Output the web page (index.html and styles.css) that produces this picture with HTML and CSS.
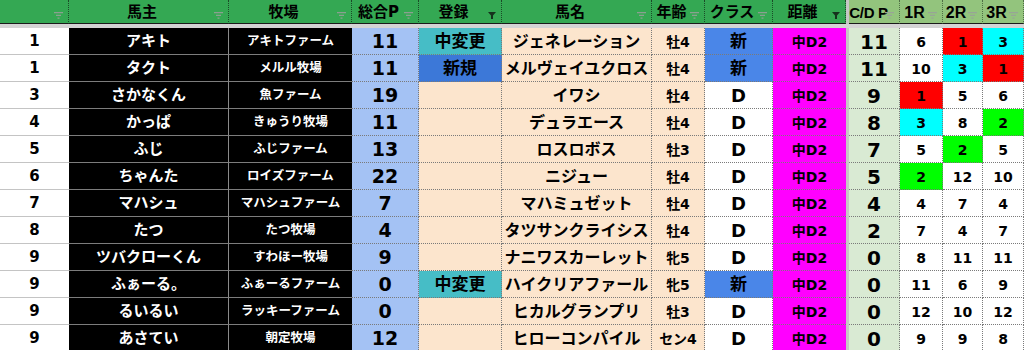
FILE: index.html
```html
<!DOCTYPE html>
<html lang="ja">
<head>
<meta charset="utf-8">
<title>馬主ランキング</title>
<link rel="stylesheet" href="styles.css">
</head>
<body>
<div class="sheet">
  <div class="row head">
    <div class="h"><svg class="flt" viewBox="0 0 9 7"><path d="M0 0h9v1.2H0zM2 2.8h5v1.2H2zM3.5 5.6h2v1.2h-2z"/></svg></div>
    <div class="h">馬主<svg class="flt" viewBox="0 0 9 7"><path d="M0 0h9v1.2H0zM2 2.8h5v1.2H2zM3.5 5.6h2v1.2h-2z"/></svg></div>
    <div class="h">牧場<svg class="flt" viewBox="0 0 9 7"><path d="M0 0h9v1.2H0zM2 2.8h5v1.2H2zM3.5 5.6h2v1.2h-2z"/></svg></div>
    <div class="h">総合P<svg class="flt" viewBox="0 0 9 7"><path d="M0 0h9v1.2H0zM2 2.8h5v1.2H2zM3.5 5.6h2v1.2h-2z"/></svg></div>
    <div class="h">登録<svg class="flt on" viewBox="0 0 8 7"><path d="M0 0h8L5 3.6V7H3V3.6z"/></svg></div>
    <div class="h">馬名<svg class="flt" viewBox="0 0 9 7"><path d="M0 0h9v1.2H0zM2 2.8h5v1.2H2zM3.5 5.6h2v1.2h-2z"/></svg></div>
    <div class="h">年齢<svg class="flt" viewBox="0 0 9 7"><path d="M0 0h9v1.2H0zM2 2.8h5v1.2H2zM3.5 5.6h2v1.2h-2z"/></svg></div>
    <div class="h">クラス<svg class="flt" viewBox="0 0 9 7"><path d="M0 0h9v1.2H0zM2 2.8h5v1.2H2zM3.5 5.6h2v1.2h-2z"/></svg></div>
    <div class="h">距離<svg class="flt on" viewBox="0 0 8 7"><path d="M0 0h8L5 3.6V7H3V3.6z"/></svg></div>
    <div class="sep"></div>
    <div class="h lg sm">C/D P<svg class="flt" viewBox="0 0 9 7"><path d="M0 0h9v1.2H0zM2 2.8h5v1.2H2zM3.5 5.6h2v1.2h-2z"/></svg></div>
    <div class="h lg">1R<svg class="flt" viewBox="0 0 9 7"><path d="M0 0h9v1.2H0zM2 2.8h5v1.2H2zM3.5 5.6h2v1.2h-2z"/></svg></div>
    <div class="h lg">2R<svg class="flt" viewBox="0 0 9 7"><path d="M0 0h9v1.2H0zM2 2.8h5v1.2H2zM3.5 5.6h2v1.2h-2z"/></svg></div>
    <div class="h lg">3R<svg class="flt" viewBox="0 0 9 7"><path d="M0 0h9v1.2H0zM2 2.8h5v1.2H2zM3.5 5.6h2v1.2h-2z"/></svg></div>
  </div>
  <div class="freeze"></div>

  <div class="row">
    <div class="c rank">1</div><div class="c owner">アキト</div><div class="c farm">アキトファーム</div>
    <div class="c tp">11</div><div class="c reg chg">中変更</div><div class="c name">ジェネレーション</div>
    <div class="c age">牡4</div><div class="c cls new">新</div><div class="c dist">中D2</div><div class="sep"></div>
    <div class="c cdp">11</div><div class="c r">6</div><div class="c r red">1</div><div class="c r cyan">3</div>
  </div>
  <div class="row">
    <div class="c rank">1</div><div class="c owner">タクト</div><div class="c farm">メルル牧場</div>
    <div class="c tp">11</div><div class="c reg nw">新規</div><div class="c name">メルヴェイユクロス</div>
    <div class="c age">牡4</div><div class="c cls new">新</div><div class="c dist">中D2</div><div class="sep"></div>
    <div class="c cdp">11</div><div class="c r">10</div><div class="c r cyan">3</div><div class="c r red">1</div>
  </div>
  <div class="row">
    <div class="c rank">3</div><div class="c owner">さかなくん</div><div class="c farm">魚ファーム</div>
    <div class="c tp">19</div><div class="c reg"></div><div class="c name">イワシ</div>
    <div class="c age">牡4</div><div class="c cls">D</div><div class="c dist">中D2</div><div class="sep"></div>
    <div class="c cdp">9</div><div class="c r red">1</div><div class="c r">5</div><div class="c r">6</div>
  </div>
  <div class="row">
    <div class="c rank">4</div><div class="c owner">かっぱ</div><div class="c farm">きゅうり牧場</div>
    <div class="c tp">11</div><div class="c reg"></div><div class="c name">デュラエース</div>
    <div class="c age">牡4</div><div class="c cls">D</div><div class="c dist">中D2</div><div class="sep"></div>
    <div class="c cdp">8</div><div class="c r cyan">3</div><div class="c r">8</div><div class="c r green">2</div>
  </div>
  <div class="row">
    <div class="c rank">5</div><div class="c owner">ふじ</div><div class="c farm">ふじファーム</div>
    <div class="c tp">13</div><div class="c reg"></div><div class="c name">ロスロボス</div>
    <div class="c age">牡3</div><div class="c cls">D</div><div class="c dist">中D2</div><div class="sep"></div>
    <div class="c cdp">7</div><div class="c r">5</div><div class="c r green">2</div><div class="c r">5</div>
  </div>
  <div class="row">
    <div class="c rank">6</div><div class="c owner">ちゃんた</div><div class="c farm">ロイズファーム</div>
    <div class="c tp">22</div><div class="c reg"></div><div class="c name">ニジュー</div>
    <div class="c age">牡4</div><div class="c cls">D</div><div class="c dist">中D2</div><div class="sep"></div>
    <div class="c cdp">5</div><div class="c r green">2</div><div class="c r">12</div><div class="c r">10</div>
  </div>
  <div class="row">
    <div class="c rank">7</div><div class="c owner">マハシュ</div><div class="c farm">マハシュファーム</div>
    <div class="c tp">7</div><div class="c reg"></div><div class="c name">マハミュゼット</div>
    <div class="c age">牡4</div><div class="c cls">D</div><div class="c dist">中D2</div><div class="sep"></div>
    <div class="c cdp">4</div><div class="c r">4</div><div class="c r">7</div><div class="c r">4</div>
  </div>
  <div class="row">
    <div class="c rank">8</div><div class="c owner">たつ</div><div class="c farm">たつ牧場</div>
    <div class="c tp">4</div><div class="c reg"></div><div class="c name">タツサンクライシス</div>
    <div class="c age">牡4</div><div class="c cls">D</div><div class="c dist">中D2</div><div class="sep"></div>
    <div class="c cdp">2</div><div class="c r">7</div><div class="c r">4</div><div class="c r">7</div>
  </div>
  <div class="row">
    <div class="c rank">9</div><div class="c owner">ツバクローくん</div><div class="c farm">すわほー牧場</div>
    <div class="c tp">9</div><div class="c reg"></div><div class="c name">ナニワスカーレット</div>
    <div class="c age">牝5</div><div class="c cls">D</div><div class="c dist">中D2</div><div class="sep"></div>
    <div class="c cdp">0</div><div class="c r">8</div><div class="c r">11</div><div class="c r">11</div>
  </div>
  <div class="row">
    <div class="c rank">9</div><div class="c owner">ふぁーる。</div><div class="c farm">ふぁーるファーム</div>
    <div class="c tp">0</div><div class="c reg chg">中変更</div><div class="c name">ハイクリアファール</div>
    <div class="c age">牝5</div><div class="c cls new">新</div><div class="c dist">中D2</div><div class="sep"></div>
    <div class="c cdp">0</div><div class="c r">11</div><div class="c r">6</div><div class="c r">9</div>
  </div>
  <div class="row">
    <div class="c rank">9</div><div class="c owner">るいるい</div><div class="c farm">ラッキーファーム</div>
    <div class="c tp">0</div><div class="c reg"></div><div class="c name">ヒカルグランプリ</div>
    <div class="c age">牡3</div><div class="c cls">D</div><div class="c dist">中D2</div><div class="sep"></div>
    <div class="c cdp">0</div><div class="c r">12</div><div class="c r">10</div><div class="c r">12</div>
  </div>
  <div class="row">
    <div class="c rank">9</div><div class="c owner">あさてい</div><div class="c farm">朝定牧場</div>
    <div class="c tp">12</div><div class="c reg"></div><div class="c name">ヒローコンパイル</div>
    <div class="c age">セン4</div><div class="c cls">D</div><div class="c dist">中D2</div><div class="sep"></div>
    <div class="c cdp">0</div><div class="c r">9</div><div class="c r">9</div><div class="c r">8</div>
  </div>
</div>
</body>
</html>
```

FILE: styles.css
```css
* {
  box-sizing: border-box;
  margin: 0;
  padding: 0;
}

body {
  margin: 0;
  background: #ffffff;
  font-family: "DejaVu Sans", "Noto Sans CJK JP", sans-serif;
  font-weight: 700;
  color: #000;
}

.sheet {
  width: 1024px;
}

.row {
  display: grid;
  grid-template-columns: 69px 160px 123px 67px 83px 150px 53px 68px 73px 3px 51px 43px 40px 41px;
  height: 27px;
}

.row.head {
  height: 24px;
}

.freeze {
  height: 4px;
  background: #d4d4d4;
}

.sep {
  background: #c6c6c6;
}

/* header */
.h {
  position: relative;
  display: flex;
  align-items: center;
  justify-content: center;
  padding: 2px 13px 0 0;
  background: #34a853;
  border-bottom: 1px solid #1a1a1a;
  border-right: 1px dotted #1b4a28;
  font-size: 15px;
  line-height: 1;
  white-space: nowrap;
}

.h.lg {
  background: #93c47d;
  border-right-color: #4f6e45;
  font-family: "Liberation Sans", "Noto Sans CJK JP", sans-serif;
  font-size: 16px;
}

.h.sm {
  font-size: 15px;
  padding-right: 11px;
  letter-spacing: -0.3px;
}

.flt {
  position: absolute;
  right: 5px;
  top: 12px;
  width: 9px;
  height: 7px;
  fill: #8aa090;
}

.h.lg .flt {
  fill: #98a596;
}

.flt.on {
  width: 8px;
  fill: #16321d;
}

/* body cells */
.c {
  display: flex;
  align-items: center;
  justify-content: center;
  border-bottom: 1px dotted #7a7a7a;
  border-right: 1px dotted #7a7a7a;
  white-space: nowrap;
  overflow: hidden;
  line-height: 1;
  padding-top: 1px;
}

.rank {
  background: #fff;
  border-right: none;
  border-bottom: 1px solid #c4c4c4;
  font-size: 15px;
}

.owner {
  background: #000;
  color: #fff;
  border-bottom: 1px solid #7c7c7c;
  border-right: 1px solid #8a8a8a;
  font-size: 15px;
}

.farm {
  background: #000;
  color: #fff;
  border-bottom: 1px solid #7c7c7c;
  border-right: none;
  font-size: 12.5px;
}

.tp {
  background: #a4c2f4;
  font-size: 19px;
}

.reg {
  background: #fce5cd;
  font-size: 17px;
}

.reg.chg {
  background: #46bdc6;
}

.reg.nw {
  background: #3c78d8;
}

.name {
  background: #fce5cd;
  font-size: 16px;
}

.age {
  background: #fce5cd;
  font-size: 14px;
}

.cls {
  background: #fff;
  font-size: 18px;
}

.cls.new {
  background: #4a86e8;
  font-size: 17px;
}

.dist {
  background: #ff00ff;
  font-size: 14px;
  border-right: none;
}

.cdp {
  background: #d9ead3;
  font-size: 20px;
}

.r {
  background: #fff;
  font-size: 14px;
}

.r.red {
  background: #ff0000;
}

.r.cyan {
  background: #00ffff;
}

.r.green {
  background: #00ff00;
}
```
